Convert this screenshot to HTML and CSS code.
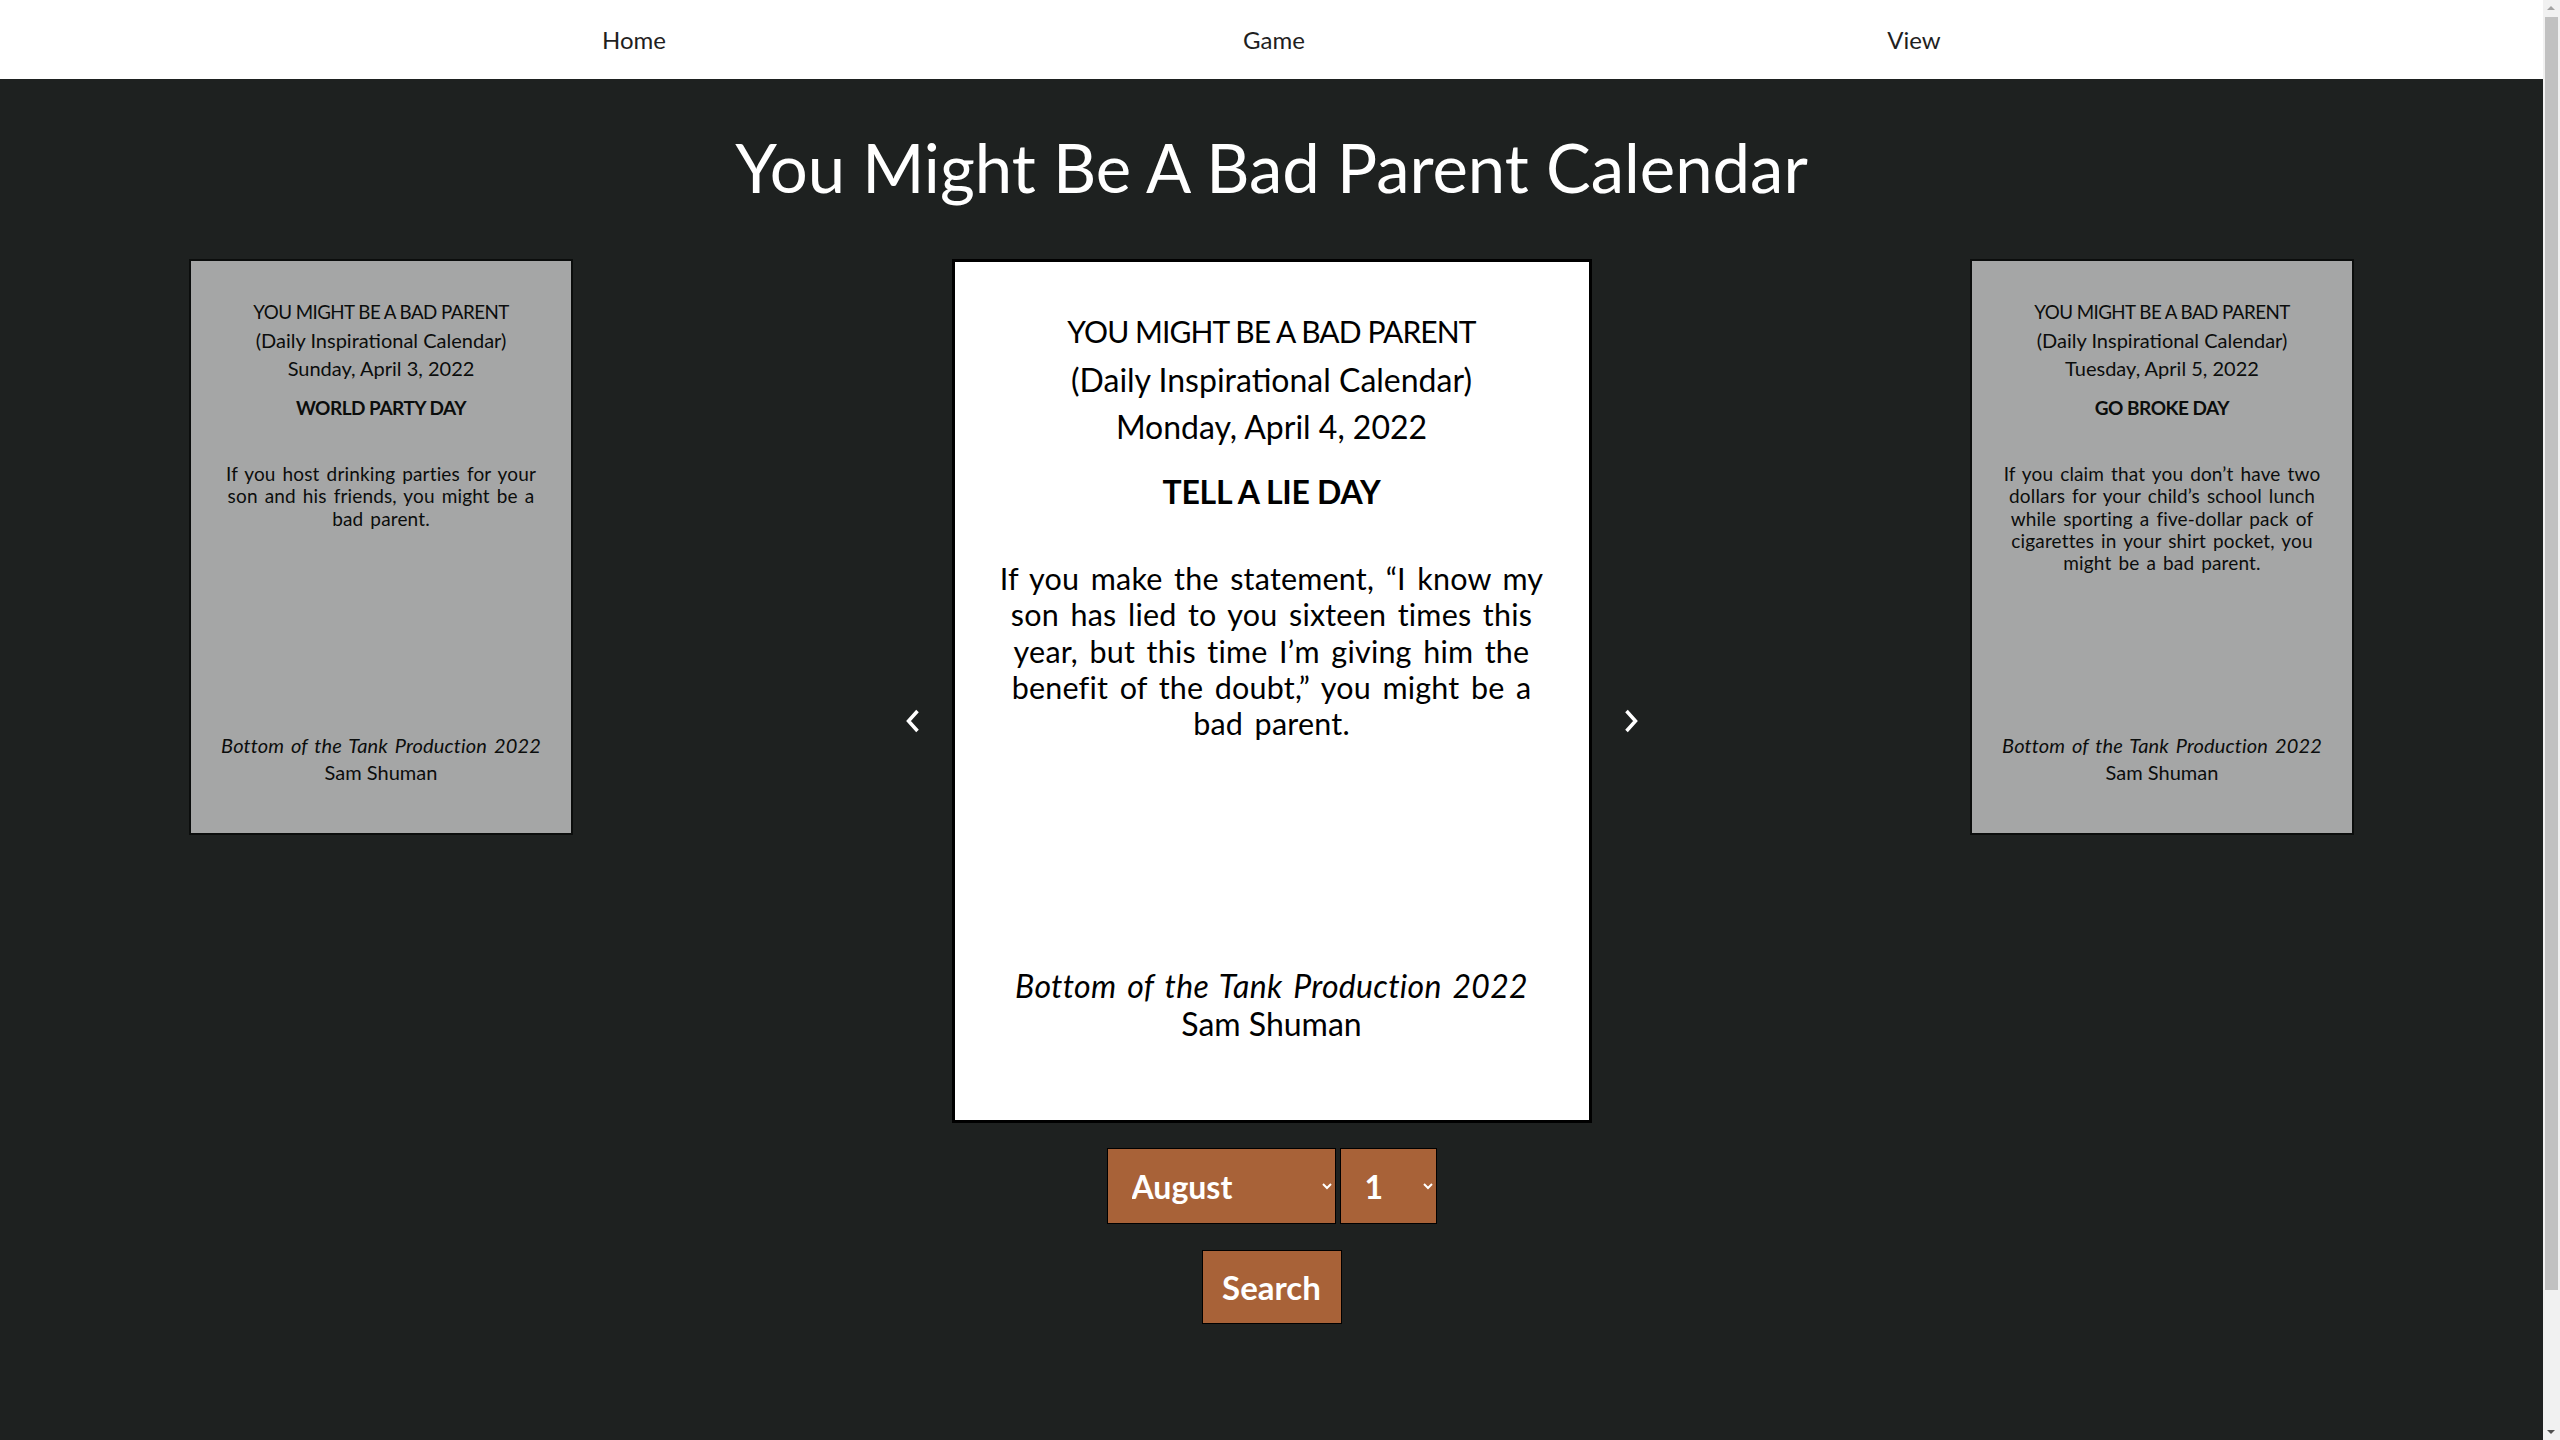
FILE: index.html
```html
<!DOCTYPE html>
<html lang="en">
<head>
<meta charset="utf-8">
<title>You Might Be A Bad Parent Calendar</title>
<link rel="stylesheet" href="styles.css">
</head>
<body>
<nav class="topnav">
  <a href="#" class="nav-link">Home</a>
  <a href="#" class="nav-link">Game</a>
  <a href="#" class="nav-link">View</a>
</nav>
<main class="page">
  <h1 class="page-title">You Might Be A Bad Parent Calendar</h1>
  <section class="carousel">
    <article class="card card-side">
      <p class="card-line caps">YOU MIGHT BE A BAD PARENT</p>
      <p class="card-line">(Daily Inspirational Calendar)</p>
      <p class="card-line">Sunday, April 3, 2022</p>
      <h2 class="card-day">WORLD PARTY DAY</h2>
      <p class="card-text">If you host drinking parties for your son and his friends, you might be a bad parent.</p>
      <footer class="card-foot"><em>Bottom of the Tank Production 2022</em><br>Sam Shuman</footer>
    </article>
    <div class="carousel-center">
      <button class="arrow" type="button" aria-label="Previous day">
        <svg width="14" height="24" viewBox="0 0 14 24"><path d="M11.5 2 L2.5 12 L11.5 22" fill="none" stroke="#fff" stroke-width="3.5"/></svg>
      </button>
      <article class="card card-main">
        <p class="card-line caps">YOU MIGHT BE A BAD PARENT</p>
        <p class="card-line">(Daily Inspirational Calendar)</p>
        <p class="card-line">Monday, April 4, 2022</p>
        <h2 class="card-day">TELL A LIE DAY</h2>
        <p class="card-text">If you make the statement, “I know my son has lied to you sixteen times this year, but this time I’m giving him the benefit of the doubt,” you might be a bad parent.</p>
        <footer class="card-foot"><em>Bottom of the Tank Production 2022</em><br>Sam Shuman</footer>
      </article>
      <button class="arrow" type="button" aria-label="Next day">
        <svg width="14" height="24" viewBox="0 0 14 24"><path d="M2.5 2 L11.5 12 L2.5 22" fill="none" stroke="#fff" stroke-width="3.5"/></svg>
      </button>
    </div>
    <article class="card card-side">
      <p class="card-line caps">YOU MIGHT BE A BAD PARENT</p>
      <p class="card-line">(Daily Inspirational Calendar)</p>
      <p class="card-line">Tuesday, April 5, 2022</p>
      <h2 class="card-day">GO BROKE DAY</h2>
      <p class="card-text">If you claim that you don’t have two dollars for your child’s school lunch while sporting a five-dollar pack of cigarettes in your shirt pocket, you might be a bad parent.</p>
      <footer class="card-foot"><em>Bottom of the Tank Production 2022</em><br>Sam Shuman</footer>
    </article>
  </section>
  <form class="date-form">
    <div class="selects">
      <select class="select select-month" aria-label="Month">
        <option>January</option>
        <option>February</option>
        <option>March</option>
        <option>April</option>
        <option>May</option>
        <option>June</option>
        <option>July</option>
        <option selected>August</option>
        <option>September</option>
        <option>October</option>
        <option>November</option>
        <option>December</option>
      </select>
      <select class="select select-day" aria-label="Day">
        <option selected>1</option><option>2</option><option>3</option><option>4</option><option>5</option>
        <option>6</option><option>7</option><option>8</option><option>9</option><option>10</option>
        <option>11</option><option>12</option><option>13</option><option>14</option><option>15</option>
        <option>16</option><option>17</option><option>18</option><option>19</option><option>20</option>
        <option>21</option><option>22</option><option>23</option><option>24</option><option>25</option>
        <option>26</option><option>27</option><option>28</option><option>29</option><option>30</option>
        <option>31</option>
      </select>
    </div>
    <button class="search-btn" type="submit">Search</button>
  </form>
</main>
<div class="scrollbar" aria-hidden="true">
  <span class="scroll-up"></span>
  <span class="scroll-thumb"></span>
  <span class="scroll-down"></span>
</div>
</body>
</html>
```

FILE: styles.css
```css
* {
  box-sizing: border-box;
}

html {
  background: #1e2120;
}

body {
  margin: 0 17px 0 0;
  background: #1e2120;
  color: #000;
  font-family: "Lato", "Open Sans", sans-serif;
}

.topnav {
  display: flex;
  align-items: center;
  height: 79px;
  padding: 0 309px 0 314px;
  background: #fff;
}

.nav-link {
  flex: 1;
  text-align: center;
  font-size: 24px;
  color: #1f1f1f;
  text-decoration: none;
}

.page {
  padding-bottom: 270px;
}

.page-title {
  margin: 49px 0 52px;
  font-size: 67px;
  line-height: 79px;
  font-weight: 400;
  color: #fff;
  text-align: center;
}

.carousel {
  display: flex;
  justify-content: space-between;
  align-items: flex-start;
  padding: 0 189px;
}

.carousel-center {
  display: flex;
  align-items: flex-start;
  gap: 32px;
}

.arrow {
  display: block;
  margin-top: 450px;
  padding: 0;
  border: 0;
  background: none;
  cursor: pointer;
}

.arrow svg {
  display: block;
}

.card {
  display: flex;
  flex-direction: column;
  flex-shrink: 0;
  background: #fff;
  text-align: center;
}

.card p,
.card h2 {
  margin: 0;
}

.card-foot {
  margin-top: auto;
}

/* main card */
.card-main {
  width: 640px;
  height: 864px;
  border: 3px solid #000;
  padding: 46px 34px 76px;
}

.card-main .card-line {
  font-size: 32px;
  line-height: 47.7px;
}

.card-main .caps {
  font-size: 30px;
  letter-spacing: -0.9px;
}

.card-main .card-day {
  margin-top: 17px;
  font-size: 32px;
  line-height: 47.7px;
  font-weight: 700;
  letter-spacing: -0.3px;
}

.card-main .card-text {
  margin-top: 44.5px;
  font-size: 30.5px;
  line-height: 36.1px;
  word-spacing: 3.5px;
  letter-spacing: 0.2px;
}

.card-main .card-foot {
  font-size: 32px;
  line-height: 38.7px;
}

.card-main .card-foot em {
  word-spacing: 3px;
  letter-spacing: 0.3px;
}

/* side cards */
.card-side {
  width: 384px;
  height: 576px;
  border: 2px solid #000;
  padding: 36.5px 22px 48px;
  opacity: 0.6;
}

.card-side .card-line {
  font-size: 20px;
  line-height: 28.4px;
}

.card-side .caps {
  font-size: 18.75px;
  letter-spacing: -0.55px;
}

.card-side .card-day {
  margin-top: 10.8px;
  font-size: 19px;
  line-height: 28.4px;
  font-weight: 700;
  letter-spacing: -0.5px;
}

.card-side .card-text {
  margin-top: 41.2px;
  font-size: 19px;
  line-height: 22.2px;
  word-spacing: 2px;
  letter-spacing: 0.15px;
}

.card-side .card-foot {
  font-size: 20px;
  line-height: 26.3px;
}

.card-side .card-foot em {
  word-spacing: 2px;
  letter-spacing: 0.15px;
}

/* date search */
.date-form {
  display: flex;
  flex-direction: column;
  align-items: center;
  gap: 26px;
  margin-top: 25px;
}

.selects {
  display: flex;
  gap: 4px;
}

.select {
  height: 76px;
  padding: 0 0 0 20px;
  border: 1px solid #000;
  background: #a86238;
  color: #fff;
  font-family: inherit;
  font-size: 32px;
  font-weight: 700;
}

.select-month {
  width: 229px;
}

.select-day {
  width: 97px;
}

.search-btn {
  width: 140px;
  height: 74px;
  padding: 0;
  border: 1px solid #000;
  background: #a86238;
  color: #fff;
  font-family: inherit;
  font-size: 33px;
  font-weight: 700;
  cursor: pointer;
}

/* imitation of the browser's classic scrollbar */
.scrollbar {
  position: fixed;
  top: 0;
  right: 0;
  width: 17px;
  height: 100vh;
  background: #f1f1f1;
}

.scroll-thumb {
  position: absolute;
  top: 17px;
  left: 2px;
  width: 13px;
  height: 1273px;
  background: #c1c1c1;
}

.scroll-up,
.scroll-down {
  position: absolute;
  left: 4px;
  width: 0;
  height: 0;
  border-left: 4.5px solid transparent;
  border-right: 4.5px solid transparent;
}

.scroll-up {
  top: 6px;
  border-bottom: 4px solid #a3a3a3;
}

.scroll-down {
  bottom: 6px;
  border-top: 4px solid #505050;
}
```
